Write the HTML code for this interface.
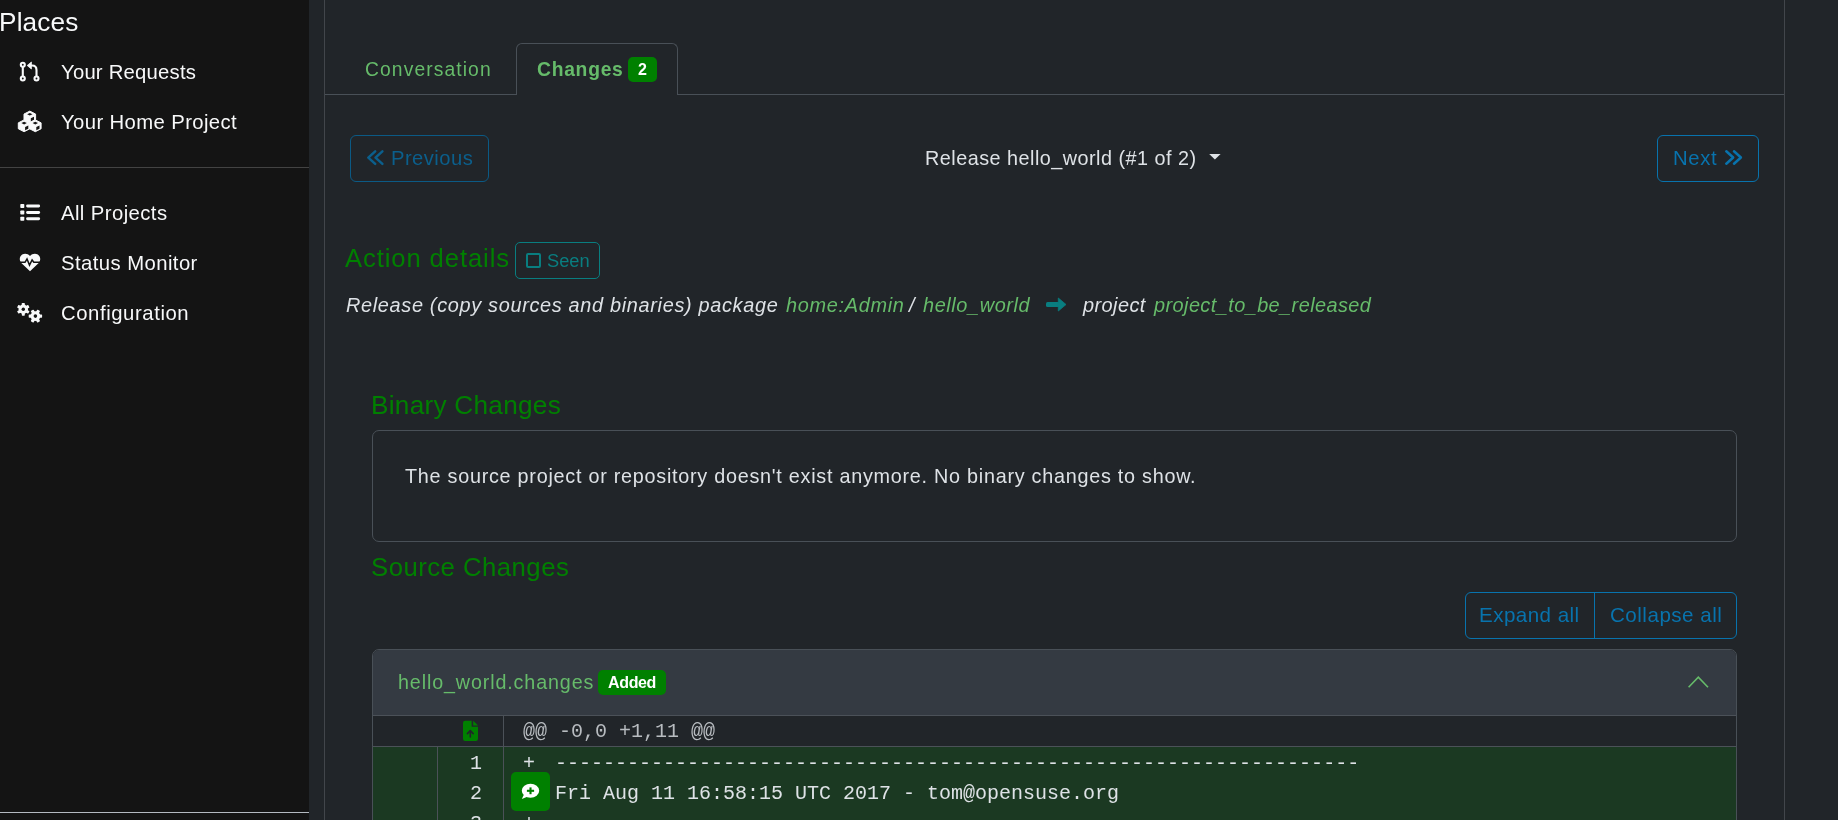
<!DOCTYPE html>
<html><head><meta charset="utf-8"><title>Request changes</title>
<style>
html,body{margin:0;padding:0;width:1838px;height:820px;overflow:hidden;background:#212529;}
body{position:relative;font-family:"Liberation Sans",sans-serif;}
.t{position:absolute;white-space:nowrap;line-height:1;will-change:transform;}
.m{position:absolute;white-space:pre;line-height:1;will-change:transform;font-family:"Liberation Mono",monospace;font-size:20px;}
.box{position:absolute;box-sizing:border-box;}
#sidebar{position:absolute;left:0;top:0;width:309px;height:820px;background:#141414;}
</style></head><body>
<nav id="sidebar">
 <div class="box" style="left:0;top:167px;width:309px;height:1px;background:#434343"></div>
 <div class="box" style="left:0;top:812px;width:309px;height:1px;background:#b4bac1"></div>
</nav>
<main>
 <div class="box" style="left:324px;top:0;width:1px;height:820px;background:#42464b"></div>
 <div class="box" style="left:1784px;top:0;width:1px;height:820px;background:#42464b"></div>
 <!-- tabs -->
 <div class="box" style="left:325px;top:94px;width:1459px;height:1px;background:#495057"></div>
 <div class="box" style="left:516px;top:43px;width:162px;height:52px;border:1px solid #495057;border-bottom:none;border-radius:6px 6px 0 0;background:#212529"></div>
 <div class="box" style="left:628px;top:57px;width:29px;height:25px;border-radius:5px;background:#008000"></div>
 <!-- prev/next -->
 <div class="box" style="left:350px;top:135px;width:139px;height:47px;border:1px solid #0b5a85;border-radius:6px"></div>
 <div class="box" style="left:1657px;top:135px;width:102px;height:47px;border:1px solid #0873ad;border-radius:6px"></div>
 <!-- seen -->
 <div class="box" style="left:515px;top:242px;width:85px;height:37px;border:1px solid #097e80;border-radius:5px"></div>
 <div class="box" style="left:526px;top:253px;width:15px;height:15px;border:2px solid #097e80;border-radius:2px"></div>
 <!-- binary card -->
 <div class="box" style="left:372px;top:430px;width:1365px;height:112px;border:1px solid #495057;border-radius:7px"></div>
 <!-- expand/collapse -->
 <div class="box" style="left:1465px;top:592px;width:272px;height:47px;border:1px solid #0873ad;border-radius:6px"></div>
 <div class="box" style="left:1594px;top:592px;width:1px;height:47px;background:#0873ad"></div>
 <!-- file card -->
 <div class="box" style="left:372px;top:649px;width:1365px;height:200px;border:1px solid #495057;border-radius:7px;background:#212529;overflow:hidden">
   <div class="box" style="left:0;top:0;width:1363px;height:66px;background:#343a42;border-bottom:1px solid #4b5158"></div>
   <div class="box" style="left:0;top:66px;width:1363px;height:31px;background:#212529;border-bottom:1px solid #4b5158"></div>
   <div class="box" style="left:130px;top:66px;width:1px;height:200px;background:#4b5158"></div>
   <div class="box" style="left:0;top:97px;width:1363px;height:120px;background:#1b3922"></div>
   <div class="box" style="left:64px;top:97px;width:1px;height:120px;background:#4b5158"></div>
   <div class="box" style="left:130px;top:97px;width:1px;height:120px;background:#4b5158"></div>
 </div>
 <div class="box" style="left:598px;top:670px;width:68px;height:25px;border-radius:5px;background:#008000"></div>
 <div class="box" style="left:511px;top:772px;width:39px;height:39px;border-radius:5px;background:#008000"></div>
</main>
<div id="places" class="t" style="left:-1.20px;top:9.11px;font-size:26.2px;color:#f8f9fa;font-weight:400;font-style:normal;letter-spacing:0.160px">Places</div><div id="yr" class="t" style="left:61.48px;top:61.70px;font-size:20.3px;color:#f8f9fa;font-weight:400;font-style:normal;letter-spacing:0.217px">Your Requests</div><div id="yhp" class="t" style="left:61.18px;top:111.70px;font-size:20.3px;color:#f8f9fa;font-weight:400;font-style:normal;letter-spacing:0.387px">Your Home Project</div><div id="ap" class="t" style="left:61.08px;top:202.80px;font-size:20.3px;color:#f8f9fa;font-weight:400;font-style:normal;letter-spacing:0.418px">All Projects</div><div id="sm" class="t" style="left:60.98px;top:252.80px;font-size:20.3px;color:#f8f9fa;font-weight:400;font-style:normal;letter-spacing:0.431px">Status Monitor</div><div id="cf" class="t" style="left:60.98px;top:303.00px;font-size:20.3px;color:#f8f9fa;font-weight:400;font-style:normal;letter-spacing:0.583px">Configuration</div><div id="conv" class="t" style="left:364.56px;top:59.71px;font-size:19.3px;color:#66bb6a;font-weight:400;font-style:normal;letter-spacing:1.091px">Conversation</div><div id="chg" class="t" style="left:537.06px;top:59.71px;font-size:19.3px;color:#66bb6a;font-weight:700;font-style:normal;letter-spacing:0.733px">Changes</div><div id="b2" class="t" style="left:637.72px;top:62.01px;font-size:16px;color:#ffffff;font-weight:700;font-style:normal;letter-spacing:0.000px">2</div><div id="prev" class="t" style="left:391.48px;top:148.00px;font-size:20.2px;color:#0b5f8c;font-weight:400;font-style:normal;letter-spacing:0.457px">Previous</div><div id="next" class="t" style="left:1673.18px;top:148.00px;font-size:20.3px;color:#0873ad;font-weight:400;font-style:normal;letter-spacing:0.667px">Next</div><div id="rel" class="t" style="left:925.32px;top:148.90px;font-size:19.8px;color:#dee2e6;font-weight:400;font-style:normal;letter-spacing:0.493px">Release hello_world (#1 of 2)</div><div id="ad" class="t" style="left:344.75px;top:245.60px;font-size:25.6px;color:#008000;font-weight:400;font-style:normal;letter-spacing:0.908px">Action details</div><div id="seen" class="t" style="left:546.54px;top:251.60px;font-size:18.3px;color:#097e80;font-weight:400;font-style:normal;letter-spacing:0.000px">Seen</div><div id="d1" class="t" style="left:345.81px;top:296.10px;font-size:19.9px;color:#dee2e6;font-weight:400;font-style:italic;letter-spacing:0.671px">Release (copy sources and binaries) package</div><div id="d2" class="t" style="left:785.81px;top:296.10px;font-size:19.9px;color:#66bb6a;font-weight:400;font-style:italic;letter-spacing:0.689px">home:Admin</div><div id="d3" class="t" style="left:909.41px;top:296.10px;font-size:19.9px;color:#dee2e6;font-weight:400;font-style:italic;letter-spacing:0.000px">/</div><div id="d4" class="t" style="left:922.81px;top:296.10px;font-size:19.9px;color:#66bb6a;font-weight:400;font-style:italic;letter-spacing:0.600px">hello_world</div><div id="d5" class="t" style="left:1082.81px;top:296.10px;font-size:19.9px;color:#dee2e6;font-weight:400;font-style:italic;letter-spacing:0.433px">project</div><div id="d6" class="t" style="left:1154.01px;top:296.10px;font-size:19.9px;color:#66bb6a;font-weight:400;font-style:italic;letter-spacing:0.429px">project_to_be_released</div><div id="bc" class="t" style="left:371.10px;top:392.01px;font-size:26.2px;color:#008000;font-weight:400;font-style:normal;letter-spacing:0.262px">Binary Changes</div><div id="bt" class="t" style="left:405.22px;top:466.61px;font-size:19.8px;color:#dee2e6;font-weight:400;font-style:normal;letter-spacing:0.741px">The source project or repository doesn't exist anymore. No binary changes to show.</div><div id="sc" class="t" style="left:371.34px;top:554.90px;font-size:25.7px;color:#008000;font-weight:400;font-style:normal;letter-spacing:0.492px">Source Changes</div><div id="ea" class="t" style="left:1479.35px;top:605.10px;font-size:20.6px;color:#0873ad;font-weight:400;font-style:normal;letter-spacing:0.444px">Expand all</div><div id="ca" class="t" style="left:1609.55px;top:605.10px;font-size:20.6px;color:#0873ad;font-weight:400;font-style:normal;letter-spacing:0.491px">Collapse all</div><div id="fn" class="t" style="left:397.82px;top:673.00px;font-size:19.7px;color:#66bb6a;font-weight:400;font-style:normal;letter-spacing:0.878px">hello_world.changes</div><div id="added" class="t" style="left:608.22px;top:675.11px;font-size:16px;color:#ffffff;font-weight:700;font-style:normal;letter-spacing:-0.350px">Added</div>
<div id="hunk" class="m" style="left:523.00px;top:722.00px;color:#b8bcc0">@@ -0,0 +1,11 @@</div><div id="p1" class="m" style="left:522.90px;top:753.50px;color:#dee2e6">+</div><div id="l1" class="m" style="left:554.80px;top:753.50px;color:#dee2e6">-------------------------------------------------------------------</div><div id="l2" class="m" style="left:554.80px;top:783.50px;color:#dee2e6">Fri Aug 11 16:58:15 UTC 2017 - tom@opensuse.org</div><div id="p3" class="m" style="left:522.90px;top:813.50px;color:#dee2e6">+</div><div id="n1" class="m" style="right:1356.00px;top:753.50px;color:#dee2e6">1</div><div id="n2" class="m" style="right:1356.00px;top:783.50px;color:#dee2e6">2</div><div id="n3" class="m" style="right:1356.00px;top:813.50px;color:#dee2e6">3</div>
<svg width="1838" height="820" viewBox="0 0 1838 820" style="position:absolute;left:0;top:0;pointer-events:none">
 <!-- requests -->
 <g fill="none" stroke="#f8f9fa" stroke-width="2.1">
  <circle cx="22.8" cy="64.7" r="2.0"/>
  <circle cx="22.8" cy="78.5" r="2.0"/>
  <line x1="22.8" y1="66.7" x2="22.8" y2="76.5"/>
  <circle cx="36.5" cy="78.5" r="2.0"/>
  <path d="M36.5 76.5 V70 Q36.5 65.5 32 65.5 H30"/>
 </g>
 <polygon points="27.2,65.5 31.4,62 31.4,69" fill="#f8f9fa" stroke="#f8f9fa" stroke-width="0.8" stroke-linejoin="round"/>
 <!-- cubes -->
 <g id="cube"><polygon points="29.80,111.10 35.60,114.05 35.60,119.95 29.80,122.90 24.00,119.95 24.00,114.05" fill="#f8f9fa" stroke="#f8f9fa" stroke-width="1" stroke-linejoin="round"/><polygon points="27.10,114.29 29.80,112.99 32.50,114.29 29.80,115.59" fill="#141414"/><polygon points="30.80,118.25 34.00,116.65 34.00,119.85 30.80,121.45" fill="#141414"/><polygon points="24.10,119.90 29.90,122.85 29.90,128.75 24.10,131.70 18.30,128.75 18.30,122.85" fill="#f8f9fa" stroke="#f8f9fa" stroke-width="1" stroke-linejoin="round"/><polygon points="21.40,123.09 24.10,121.79 26.80,123.09 24.10,124.39" fill="#141414"/><polygon points="25.10,127.05 28.30,125.45 28.30,128.65 25.10,130.25" fill="#141414"/><polygon points="35.30,119.90 41.10,122.85 41.10,128.75 35.30,131.70 29.50,128.75 29.50,122.85" fill="#f8f9fa" stroke="#f8f9fa" stroke-width="1" stroke-linejoin="round"/><polygon points="32.60,123.09 35.30,121.79 38.00,123.09 35.30,124.39" fill="#141414"/><polygon points="36.30,127.05 39.50,125.45 39.50,128.65 36.30,130.25" fill="#141414"/></g>
 <!-- list -->
 <g fill="#f8f9fa">
  <rect x="20.3" y="204" width="4" height="4" rx="0.8"/>
  <rect x="20.3" y="210.5" width="4" height="4" rx="0.8"/>
  <rect x="20.3" y="216.8" width="4" height="4" rx="0.8"/>
  <rect x="26.1" y="204.6" width="14" height="2.9" rx="1.4"/>
  <rect x="26.1" y="211" width="14" height="2.9" rx="1.4"/>
  <rect x="26.1" y="217.3" width="14" height="2.9" rx="1.4"/>
 </g>
 <!-- heart pulse -->
 <path d="M30 271.2 L21.3 263 C19 260.6 19.3 256.3 22.2 254.5 C24.8 252.9 28 253.6 30 256 C32 253.6 35.2 252.9 37.8 254.5 C40.7 256.3 41 260.6 38.7 263 Z" fill="#f8f9fa"/>
 <polyline points="18,262.3 25,262.3 27,259 29.5,265.1 32.1,260 33.8,262.3 42,262.3" fill="none" stroke="#141414" stroke-width="1.5" stroke-linejoin="miter"/>
 <!-- gears -->
 <g fill="#f8f9fa">
  <g transform="translate(23.3 309.3)">
   <circle r="4.7"/>
   <rect x="-1.5" y="-6.4" width="3" height="12.8" rx="0.6"/>
   <rect x="-1.5" y="-6.4" width="3" height="12.8" rx="0.6" transform="rotate(60)"/>
   <rect x="-1.5" y="-6.4" width="3" height="12.8" rx="0.6" transform="rotate(120)"/>
   <circle r="1.7" fill="#141414"/>
  </g>
  <g transform="translate(35.4 316.1)">
   <circle r="4.9"/>
   <rect x="-1.6" y="-6.7" width="3.2" height="13.4" rx="0.6" transform="rotate(30)"/>
   <rect x="-1.6" y="-6.7" width="3.2" height="13.4" rx="0.6" transform="rotate(90)"/>
   <rect x="-1.6" y="-6.7" width="3.2" height="13.4" rx="0.6" transform="rotate(150)"/>
   <circle r="1.8" fill="#141414"/>
  </g>
 </g>
 <!-- prev chevrons -->
 <g fill="none" stroke="#0b5f8c" stroke-width="2.5" stroke-linecap="round" stroke-linejoin="round">
  <polyline points="375.2,151.3 368.3,157.6 375.2,163.9"/>
  <polyline points="382.4,151.3 375.5,157.6 382.4,163.9"/>
 </g>
 <!-- next chevrons -->
 <g fill="none" stroke="#0873ad" stroke-width="2.5" stroke-linecap="round" stroke-linejoin="round">
  <polyline points="1726.3,151.3 1733.2,157.5 1726.3,163.7"/>
  <polyline points="1734,151.3 1740.9,157.5 1734,163.7"/>
 </g>
 <!-- caret -->
 <polygon points="1209.2,154 1220.6,154 1214.9,159.6" fill="#dee2e6"/>
 <!-- teal arrow -->
 <g fill="#097e80">
  <rect x="1046" y="302" width="13.5" height="5" rx="1.5"/>
  <polygon points="1058.3,298 1066,304.5 1058.3,311" stroke="#097e80" stroke-width="0.8" stroke-linejoin="round"/>
 </g>
 <!-- chevron up -->
 <polyline points="1688.6,687.2 1698.3,677.2 1708,687.2" fill="none" stroke="#66bb6a" stroke-width="1.6"/>
 <!-- file arrow up -->
 <path d="M463 723 Q463 720.8 465.2 720.8 H471.6 V726.8 H478 V738.7 Q478 740.9 475.8 740.9 H465.2 Q463 740.9 463 738.7 Z" fill="#008000"/>
 <polygon points="473.2,720.8 478,725.6 473.2,725.6" fill="#008000"/>
 <g fill="none" stroke="#212529" stroke-width="1.6" stroke-linecap="round" stroke-linejoin="round">
  <line x1="470.3" y1="731" x2="470.3" y2="737"/>
  <polyline points="467.4,733.6 470.3,730.6 473.2,733.6"/>
 </g>
 <!-- comment medical -->
 <ellipse cx="530.5" cy="790.8" rx="8.7" ry="7" fill="#ffffff"/>
 <polygon points="521.8,799 524.5,793.5 528,796.5" fill="#ffffff"/>
 <g stroke="#008000" stroke-width="2.1">
  <line x1="526.9" y1="790.8" x2="534.1" y2="790.8"/>
  <line x1="530.5" y1="787.4" x2="530.5" y2="794.2"/>
 </g>
</svg>

</body></html>
